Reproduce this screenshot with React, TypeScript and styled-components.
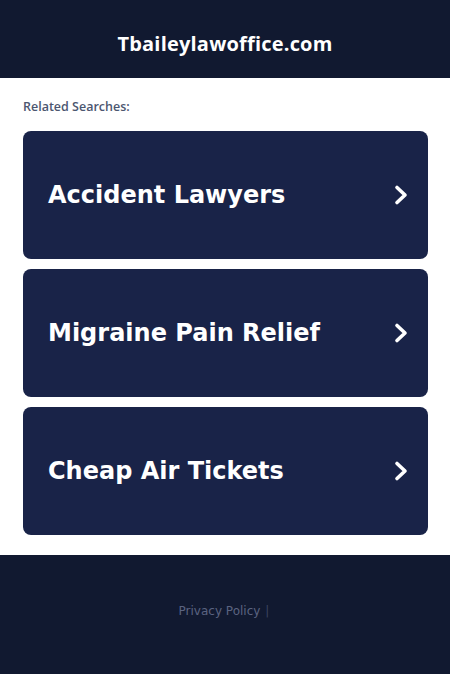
import styled, { createGlobalStyle } from 'styled-components';

const GlobalStyle = createGlobalStyle`
	body {
		margin: 0;
		background: #ffffff;
		font-family: 'DejaVu Sans', sans-serif;
	}
`;

const Header = styled.header`
	height: 78px;
	box-sizing: border-box;
	padding-top: 8px;
	background: #111930;
	display: flex;
	align-items: center;
	justify-content: center;
	h1 {
		margin: 0;
		color: #ffffff;
		font-family: 'Open Sans', 'DejaVu Sans', sans-serif;
		font-size: 20px;
		font-weight: 700;
		letter-spacing: 0.2px;
	}
`;

const Main = styled.main`
	padding: 20px 22px 20px 23px;
`;

const Label = styled.div`
	font-family: 'Open Sans', sans-serif;
	font-size: 12.5px;
	font-weight: 600;
	color: #4c5670;
	margin-bottom: 16px;
`;

const List = styled.div`
	display: flex;
	flex-direction: column;
	gap: 10px;
`;

const Card = styled.a`
	display: flex;
	align-items: center;
	justify-content: space-between;
	height: 128px;
	padding: 0 18px 0 25px;
	box-sizing: border-box;
	background: #192348;
	border-radius: 8px;
	color: #ffffff;
	text-decoration: none;
	font-size: 24px;
	font-weight: 700;
`;

const Footer = styled.footer`
	height: 119px;
	box-sizing: border-box;
	padding: 49px 2px 0 0;
	background: #111930;
	display: flex;
	justify-content: center;
	font-family: 'DejaVu Sans', sans-serif;
	font-size: 12px;
	color: #5b6380;
	.sep {
		margin-left: 5px;
		color: #3b4360;
	}
`;

const Chevron = () => (
	<svg width='18' height='22' viewBox='0 0 18 22' fill='none'>
		<path
			d='M5 3.5 L13 11 L5 18.5'
			stroke='#ffffff'
			strokeWidth='3.6'
			strokeLinecap='round'
			strokeLinejoin='round'
		/>
	</svg>
);

const searches = ['Accident Lawyers', 'Migraine Pain Relief', 'Cheap Air Tickets'];

const App = () => {
	return (
		<>
			<GlobalStyle />
			<Header>
				<h1>Tbaileylawoffice.com</h1>
			</Header>
			<Main>
				<Label>Related Searches:</Label>
				<List>
					{searches.map((s) => (
						<Card key={s} href='#'>
							<span>{s}</span>
							<Chevron />
						</Card>
					))}
				</List>
			</Main>
			<Footer>
				Privacy Policy<span className='sep'>|</span>
			</Footer>
		</>
	);
};

export default App;
